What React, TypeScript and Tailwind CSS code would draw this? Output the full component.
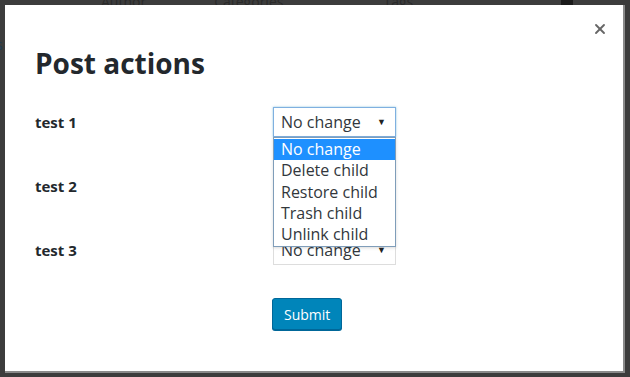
import { X } from 'lucide-react';

const rows = ['test 1', 'test 2', 'test 3'];
const options = ['No change', 'Delete child', 'Restore child', 'Trash child', 'Unlink child'];

function Select({ focused }: { focused?: boolean }) {
  return (
    <div
      className={`flex h-[30px] w-[123px] items-center justify-between border bg-white pl-[7px] pr-[9px] text-[16px] text-[#32373c] ${
        focused ? 'border-[#7fb0e0] shadow-[0_0_2px_rgba(30,140,190,0.5)]' : 'border-[#dddddd]'
      }`}
    >
      <span>No change</span>
      <span className="text-[9px] text-[#222]">▼</span>
    </div>
  );
}

export default function App() {
  return (
    <div className="relative h-[377px] w-[630px] overflow-hidden bg-[#3c3c3c] font-['Open_Sans',sans-serif]">
      {/* page behind the overlay */}
      <div className="absolute left-0 top-[-9px] flex w-full items-start text-[14px] text-[#2a2a2a]">
        <span className="ml-[101px]">Author</span>
        <span className="ml-[68px]">Categories</span>
        <span className="ml-[100px]">Tags</span>
        <span className="ml-[148px] mt-[5px] h-[14px] w-[12px] bg-[#1a1a1a]" />
      </div>
      <span className="absolute left-[-4px] top-[34px] text-[14px] text-[#1c3d54]">s</span>

      {/* modal */}
      <div className="absolute left-[5px] top-[5px] h-[368px] w-[620px] border-r-2 border-b-2 border-[#8a8a8a] bg-white">
        <button className="absolute right-[15px] top-[16px] text-[#666]">
          <X size={16} strokeWidth={2.8} />
        </button>

        <div className="pl-[30px] pt-[38px]">
          <h1 className="text-[28px] font-bold leading-[40px] text-[#23282d]">Post actions</h1>

          <div className="relative mt-[24px] flex flex-col gap-[34px]">
            {rows.map((r, i) => (
              <div key={r} className="flex items-center">
                <span className="w-[238px] text-[15px] font-bold text-[#23282d]">{r}</span>
                <Select focused={i === 0} />
              </div>
            ))}

            {/* open dropdown of the first select */}
            <div className="absolute left-[238px] top-[30px] w-[123px] border border-[#7f9db9] bg-white py-px text-[16px] leading-[21.3px] text-[#32373c] shadow-[0_1px_3px_rgba(0,0,0,0.15)]">
              {options.map((o, i) => (
                <div key={o} className={`pl-[7px] ${i === 0 ? 'bg-[#1e90ff] text-white' : ''}`}>
                  {o}
                </div>
              ))}
            </div>
          </div>

          <div className="mt-[33px] pl-[237px]">
            <button className="h-[32px] rounded-[3px] border border-[#006799] bg-[#0085ba] px-[11px] text-[14px] text-white shadow-[0_1px_0_#006799]">
              Submit
            </button>
          </div>
        </div>
      </div>
    </div>
  );
}
